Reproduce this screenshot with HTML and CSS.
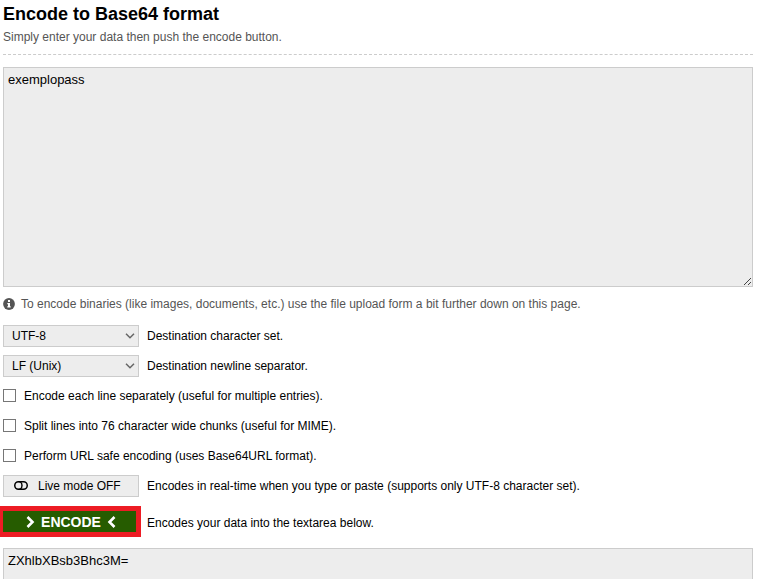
FILE: index.html
```html
<!DOCTYPE html>
<html lang="en">
<head>
<meta charset="utf-8">
<title>Encode to Base64 format</title>
<link rel="stylesheet" href="styles.css">
</head>
<body>
<main class="page">
  <header class="header">
    <h1 class="title">Encode to Base64 format</h1>
    <p class="subtitle">Simply enter your data then push the encode button.</p>
  </header>
  <div class="box input-box">exemplopass
    <svg class="grip" width="9" height="9" viewBox="0 0 9 9" shape-rendering="crispEdges"><path d="M1 7h1v1h-1zM2 6h1v1h-1zM3 5h1v1h-1zM4 4h1v1h-1zM5 3h1v1h-1zM6 2h1v1h-1zM7 1h1v1h-1zM5 7h1v1h-1zM6 6h1v1h-1zM7 5h1v1h-1z" fill="#444"/></svg>
  </div>
  <p class="info">
    <svg class="info-icon" width="12" height="12" viewBox="0 0 12 12"><circle cx="6" cy="6" r="5.9" fill="#555"/><path d="M5 2h2v2H5zM4.3 5H7v3.2h.7v1.3H4.3V8.2H5V6.2h-.7z" fill="#fff"/></svg>
    <span>To encode binaries (like images, documents, etc.) use the file upload form a bit further down on this page.</span>
  </p>
  <div class="row">
    <div class="control select"><span>UTF-8</span><svg width="10" height="6" viewBox="0 0 10 6"><path d="M1 .8l4 4 4-4" fill="none" stroke="#666" stroke-width="1.5"/></svg></div>
    <span>Destination character set.</span>
  </div>
  <div class="row">
    <div class="control select"><span>LF (Unix)</span><svg width="10" height="6" viewBox="0 0 10 6"><path d="M1 .8l4 4 4-4" fill="none" stroke="#666" stroke-width="1.5"/></svg></div>
    <span>Destination newline separator.</span>
  </div>
  <label class="row"><span class="tick"></span><span>Encode each line separately (useful for multiple entries).</span></label>
  <label class="row"><span class="tick"></span><span>Split lines into 76 character wide chunks (useful for MIME).</span></label>
  <label class="row"><span class="tick"></span><span>Perform URL safe encoding (uses Base64URL format).</span></label>
  <div class="row">
    <div class="control live"><svg class="toggle" width="14" height="9" viewBox="0 0 14 9"><rect x=".75" y=".75" width="12.5" height="7.5" rx="3.75" fill="none" stroke="#000" stroke-width="1.5"/><path d="M4.5 .75a3.3 3.75 0 0 1 0 7.5M6.5 1a4.5 4.5 0 0 1 0 7" fill="none" stroke="#000" stroke-width="1.1"/></svg><span>Live mode OFF</span></div>
    <span>Encodes in real-time when you type or paste (supports only UTF-8 character set).</span>
  </div>
  <div class="row encode-row">
    <div class="encode"><svg width="9" height="12" viewBox="0 0 9 12"><path d="M1.5 1l5 5-5 5" fill="none" stroke="#fff" stroke-width="2.6"/></svg><span>ENCODE</span><svg width="9" height="12" viewBox="0 0 9 12"><path d="M7.5 1l-5 5 5 5" fill="none" stroke="#fff" stroke-width="2.6"/></svg></div>
    <span class="encode-note">Encodes your data into the textarea below.</span>
  </div>
  <div class="box output-box">ZXhlbXBsb3Bhc3M=</div>
</main>
</body>
</html>
```
FILE: styles.css
```css
* { box-sizing: border-box; }
body {
  margin: 0;
  background: #fff;
  color: #000;
  font: 12px/20px "Liberation Sans", Arial, sans-serif;
  white-space: nowrap;
}
.page {
  display: flex;
  flex-direction: column;
  width: 753px;
  height: 579px;
  padding-left: 3px;
}
.header { height: 55px; border-bottom: 1px dashed #ccc; }
.title { margin: 0; padding-top: 3px; font-size: 18px; line-height: 22px; }
.subtitle { margin: 0; padding-top: 2px; color: #555; }
.box {
  padding: 2px 4px;
  border: 1px solid #ccc;
  background: #ededed;
  font-size: 13px;
}
.input-box { position: relative; height: 220px; margin-top: 12px; }
.grip { position: absolute; right: 0; bottom: 0; }
.info {
  display: flex;
  align-items: center;
  gap: 6px;
  height: 20px;
  margin: 7px 0;
  color: #555;
}
.row {
  display: flex;
  align-items: center;
  gap: 8px;
  height: 30px;
}
.control {
  display: flex;
  align-items: center;
  width: 136px;
  height: 22px;
  border: 1px solid #ccc;
  background: #ededed;
}
.select { justify-content: space-between; padding: 0 3px 0 8px; }
.tick {
  width: 13px;
  height: 13px;
  margin-bottom: 1px;
  border: 1px solid #767676;
  background: #fff;
}
.live { gap: 10px; padding-left: 10px; }
.toggle { margin-bottom: 1px; }
.encode-row { height: 31px; margin: 5px 0 11px -3px; gap: 6px; }
.encode {
  display: flex;
  align-items: center;
  justify-content: center;
  gap: 6px;
  width: 141px;
  height: 31px;
  padding-left: 3px;
  border: solid #ed1c24;
  border-width: 5px 5px 5px 3px;
  background: #265c00;
  color: #fff;
  font-size: 14px;
  font-weight: bold;
}
.encode-note { padding-top: 2px; }
.output-box { flex: 1; border-bottom: 0; }
```
